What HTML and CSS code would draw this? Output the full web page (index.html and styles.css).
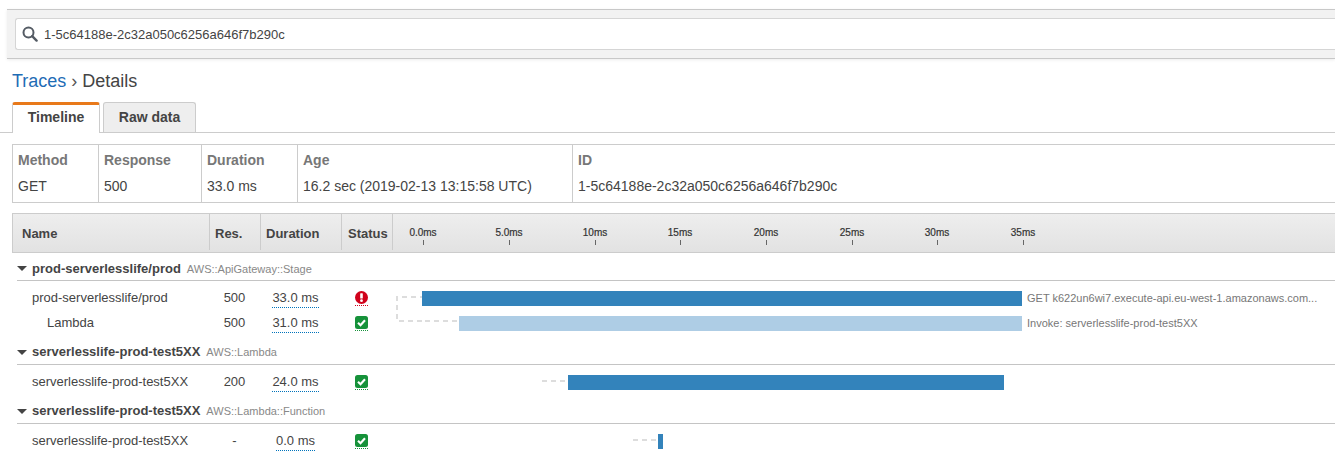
FILE: index.html
```html
<!DOCTYPE html>
<html lang="en">
<head>
<meta charset="utf-8">
<title>Trace details</title>
<link rel="stylesheet" href="styles.css">
</head>
<body>
<div class="searchband">
  <div class="searchbox">
    <svg class="searchicon" width="16" height="16" viewBox="0 0 16 16"><circle cx="6.5" cy="6.5" r="5" fill="none" stroke="#545b64" stroke-width="2"/><path d="M10.2 10.2 14.6 14.6" stroke="#545b64" stroke-width="2.4" stroke-linecap="round"/></svg>
    <span>1-5c64188e-2c32a050c6256a646f7b290c</span>
  </div>
</div>
<h1 class="crumbs"><a href="#">Traces</a><span class="sep">›</span><span>Details</span></h1>
<div class="tabs">
  <div class="tab active">Timeline</div>
  <div class="tab">Raw data</div>
</div>
<div class="summary">
  <div class="cell c1"><b>Method</b><span>GET</span></div>
  <div class="cell c2"><b>Response</b><span>500</span></div>
  <div class="cell c3"><b>Duration</b><span>33.0 ms</span></div>
  <div class="cell c4"><b>Age</b><span>16.2 sec (2019-02-13 13:15:58 UTC)</span></div>
  <div class="cell c5"><b>ID</b><span>1-5c64188e-2c32a050c6256a646f7b290c</span></div>
</div>
<div class="table">
  <div class="thead">
    <div class="th name">Name</div>
    <div class="th res">Res.</div>
    <div class="th dur">Duration</div>
    <div class="th stat">Status</div>
    <div class="th axis">
      <span class="tick" style="left:30px"><i>0.0ms</i></span>
      <span class="tick" style="left:116px"><i>5.0ms</i></span>
      <span class="tick" style="left:202px"><i>10ms</i></span>
      <span class="tick" style="left:287px"><i>15ms</i></span>
      <span class="tick" style="left:373px"><i>20ms</i></span>
      <span class="tick" style="left:459px"><i>25ms</i></span>
      <span class="tick" style="left:544px"><i>30ms</i></span>
      <span class="tick" style="left:630px"><i>35ms</i></span>
    </div>
  </div>

  <div class="group first"><span class="caret"></span><b>prod-serverlesslife/prod</b><small>AWS::ApiGateway::Stage</small></div>
  <div class="rows">
    <div class="row">
      <div class="name indent1">prod-serverlesslife/prod</div>
      <div class="res">500</div>
      <div class="dur"><span class="dotted">33.0 ms</span></div>
      <div class="stat"><span class="flag err"><svg width="13" height="13" viewBox="0 0 13 13"><circle cx="6.5" cy="6.5" r="6.5" fill="#d0021b"/><rect x="5.2" y="2.2" width="2.6" height="5.4" rx=".6" fill="#fff"/><circle cx="6.5" cy="9.7" r="1.4" fill="#fff"/></svg></span></div>
      <div class="track">
        <svg class="link" width="30" height="30" viewBox="0 0 30 30" style="left:4px;top:10px"><path d="M29 1H1V25H29" fill="none" stroke="#ddd" stroke-width="2" stroke-dasharray="5 4"/></svg>
        <span class="bar" style="left:29px;width:600px"></span>
        <span class="note" style="left:634px">GET k622un6wi7.execute-api.eu-west-1.amazonaws.com...</span>
      </div>
    </div>
    <div class="row">
      <div class="name indent2">Lambda</div>
      <div class="res">500</div>
      <div class="dur"><span class="dotted">31.0 ms</span></div>
      <div class="stat"><span class="flag ok"><svg width="13" height="13" viewBox="0 0 13 13"><rect width="13" height="13" rx="2.5" fill="#16923a"/><path d="M3 6.8 5.5 9.2 10 4.3" fill="none" stroke="#fff" stroke-width="2.2"/></svg></span></div>
      <div class="track">
        <svg class="link" width="37" height="4" viewBox="0 0 37 4" style="left:33px;top:8px"><path d="M0 2H32" stroke="#ddd" stroke-width="2" stroke-dasharray="5 4"/></svg>
        <span class="bar light" style="left:66px;width:563px"></span>
        <span class="note" style="left:634px">Invoke: serverlesslife-prod-test5XX</span>
      </div>
    </div>
  </div>

  <div class="group"><span class="caret"></span><b>serverlesslife-prod-test5XX</b><small>AWS::Lambda</small></div>
  <div class="rows">
    <div class="row">
      <div class="name indent1">serverlesslife-prod-test5XX</div>
      <div class="res">200</div>
      <div class="dur"><span class="dotted">24.0 ms</span></div>
      <div class="stat"><span class="flag ok"><svg width="13" height="13" viewBox="0 0 13 13"><rect width="13" height="13" rx="2.5" fill="#16923a"/><path d="M3 6.8 5.5 9.2 10 4.3" fill="none" stroke="#fff" stroke-width="2.2"/></svg></span></div>
      <div class="track">
        <svg class="link" width="25" height="4" viewBox="0 0 25 4" style="left:150px;top:9px"><path d="M0 2H25" stroke="#ddd" stroke-width="2" stroke-dasharray="5 4"/></svg>
        <span class="bar" style="left:175px;width:436px"></span>
      </div>
    </div>
  </div>

  <div class="group"><span class="caret"></span><b>serverlesslife-prod-test5XX</b><small>AWS::Lambda::Function</small></div>
  <div class="rows">
    <div class="row">
      <div class="name indent1">serverlesslife-prod-test5XX</div>
      <div class="res">-</div>
      <div class="dur"><span class="dotted">0.0 ms</span></div>
      <div class="stat"><span class="flag ok"><svg width="13" height="13" viewBox="0 0 13 13"><rect width="13" height="13" rx="2.5" fill="#16923a"/><path d="M3 6.8 5.5 9.2 10 4.3" fill="none" stroke="#fff" stroke-width="2.2"/></svg></span></div>
      <div class="track">
        <svg class="link" width="25" height="4" viewBox="0 0 25 4" style="left:241px;top:9px"><path d="M0 2H25" stroke="#ddd" stroke-width="2" stroke-dasharray="5 4"/></svg>
        <span class="bar" style="left:265px;width:5px"></span>
      </div>
    </div>
  </div>
</div>
</body>
</html>
```
FILE: styles.css
```css
* { box-sizing: border-box; }
html, body { margin: 0; padding: 0; height: 469px; overflow: hidden; background: #fff; }
body { font-family: "Liberation Sans", Arial, sans-serif; font-size: 13px; color: #444; padding-top: 9px; }

.searchband { margin-left: 7px; height: 50px; background: #f2f2f2; border-top: 1px solid #c8c8c8; border-bottom: 1px solid #c8c8c8; padding: 8px 0 0 8px; box-shadow: 0 1px 3px rgba(0,0,0,.08); }
.searchbox { height: 32px; background: #fff; border: 1px solid #d5d5d5; border-right: 0; border-radius: 3px 0 0 3px; display: flex; align-items: center; padding-left: 6px; gap: 6px; color: #444; font-size: 13px; }
.searchicon { flex: none; }

.crumbs { margin: 0; padding: 11px 0 0 12px; height: 43px; font-size: 18px; font-weight: 400; line-height: 22px; color: #444; }
.crumbs a { color: #1f6cb5; text-decoration: none; }
.crumbs .sep { margin: 0 5px; color: #555; }

.tabs { display: flex; padding-left: 12px; height: 31px; border-bottom: 1px solid #ccc; gap: 3px; }
.tab { height: 30px; width: 93px; background: #eee; border: 1px solid #ccc; border-bottom: 0; border-radius: 3px 3px 0 0; text-align: center; font-weight: 700; font-size: 14px; line-height: 28px; color: #444; }
.tab.active { width: 88px; height: 31px; background: #fff; border-top: 3px solid #e8791a; line-height: 24px; }

.summary { display: flex; margin: 11px 0 0 12px; height: 59px; border: 1px solid #ccc; border-right: 0; }
.cell { display: flex; flex-direction: column; padding: 7px 0 0 5px; border-right: 1px solid #ccc; line-height: 16px; font-size: 14px; gap: 10px; }
.cell b { color: #777; font-size: 14px; }
.cell span { color: #444; font-size: 14px; white-space: nowrap; }
.c1 { width: 86px; }
.c2 { width: 103px; }
.c3 { width: 96px; }
.c4 { width: 275px; }
.c5 { flex: 1; border-right: 0; }

.table { margin: 10px 0 0 12px; }
.thead { display: flex; height: 40px; background: linear-gradient(#eee, #e2e2e2); border: 1px solid #ccc; border-right: 0; font-weight: 700; font-size: 13px; color: #444; }
.th { border-right: 1px solid #ccc; height: 36px; line-height: 40px; }
.thead .name { width: 197px; padding-left: 9px; }
.thead .res { width: 51px; padding-left: 5px; }
.thead .dur { width: 81px; padding-left: 5px; }
.thead .stat { width: 51px; padding-left: 6px; }
.thead .axis { flex: 1; border-right: 0; position: relative; }
.tick { position: absolute; top: 26px; width: 1px; height: 5px; background: #666; }
.tick i { position: absolute; left: -20px; top: -12px; width: 40px; text-align: center; font-style: normal; font-size: 10px; line-height: 10px; font-weight: 400; color: #333; -webkit-text-stroke: .2px #333; }

.group { margin-left: 5px; height: 29px; padding-top: 8px; border-bottom: 1px solid #c4c4c4; display: flex; align-items: baseline; line-height: 15px; }
.group.first { height: 28px; padding-top: 8px; }
.group b { font-size: 13px; color: #444; }
.group small { font-size: 11px; color: #888; margin-left: 6px; }
.caret { width: 0; height: 0; border: 5px solid transparent; border-top: 5px solid #444; border-bottom: 0; margin-right: 5px; align-self: center; margin-top: -4px; }

.rows { padding-top: 5px; }
.row { display: flex; height: 25px; line-height: 23px; position: relative; }
.row .name { width: 197px; white-space: nowrap; }
.indent1 { padding-left: 20px; }
.indent2 { padding-left: 35px; }
.row .res { width: 51px; text-align: center; }
.row .dur { width: 81px; text-align: center; padding-right: 10px; }
.row .stat { width: 51px; display: flex; justify-content: center; padding-right: 10px; }
.dotted { border-bottom: 1px dotted #0073bb; padding-bottom: 2px; }
.flag { height: 20px; padding-top: 5px; line-height: 0; display: block; border-bottom: 1px dotted; }
.flag.err { border-color: #d0021b; }
.flag.ok { border-color: #16923a; }

.track { position: relative; flex: 1; }
.bar { position: absolute; top: 6px; height: 15px; background: #3383bb; transform: translate(1px, -1px); }
.bar.light { background: #aecde5; }
.note { position: absolute; top: 0; font-size: 11px; line-height: 25px; color: #777; white-space: nowrap; transform: translateX(1px); }
.link { position: absolute; }
```
